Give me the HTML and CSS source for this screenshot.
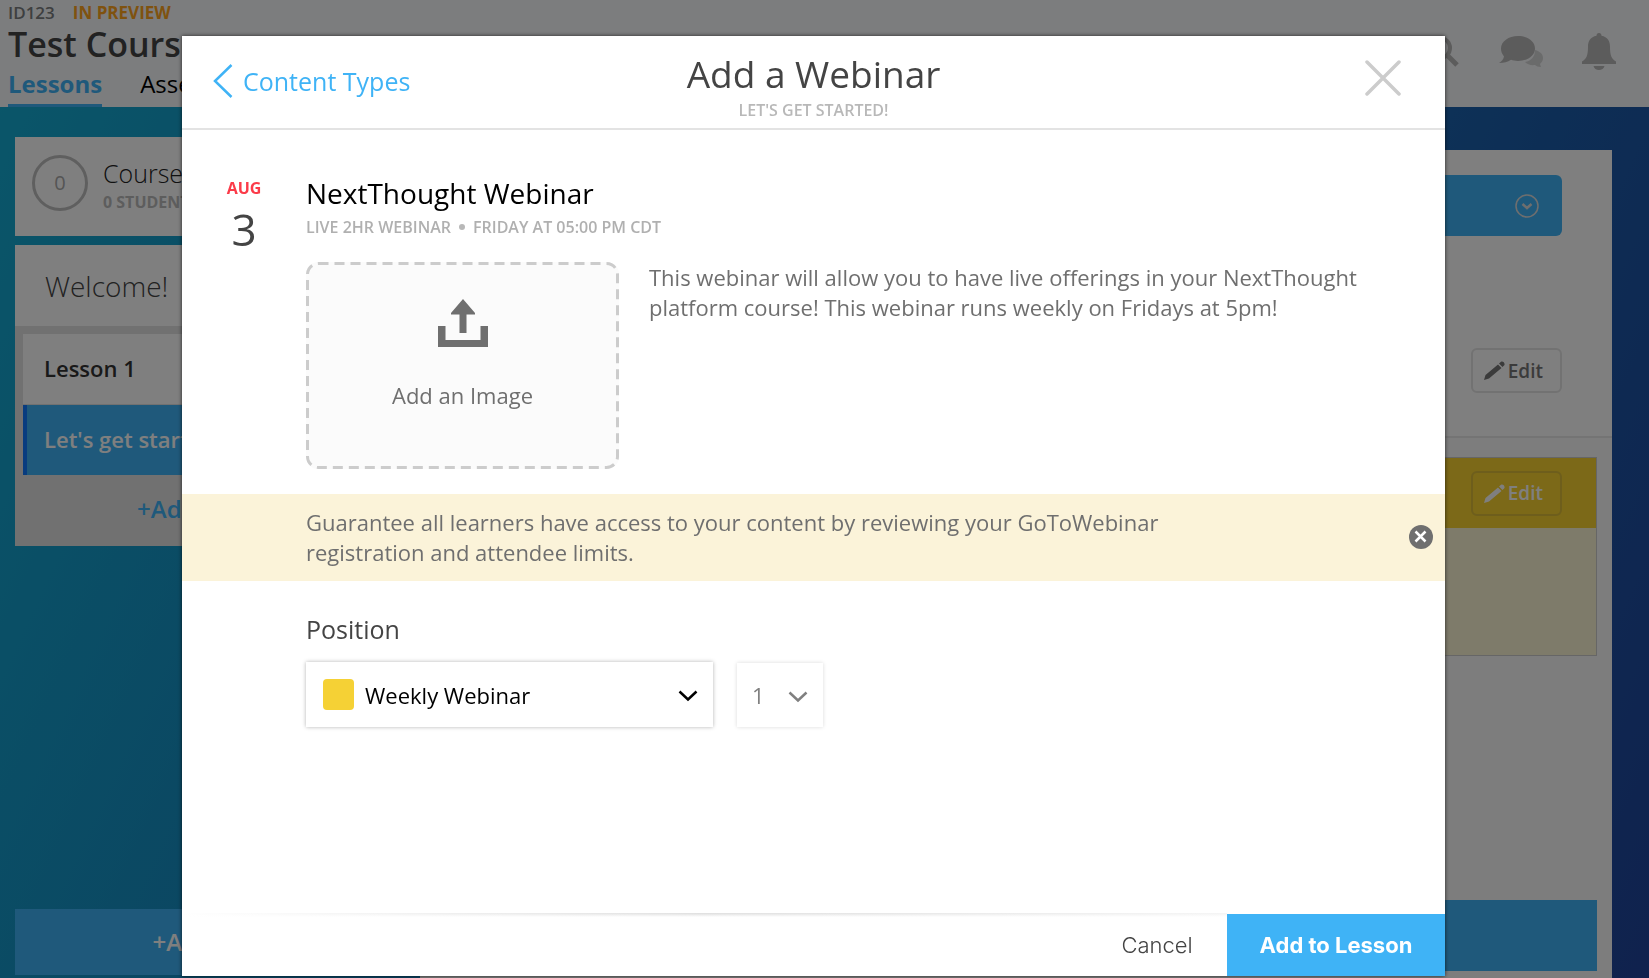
FILE: index.html
```html
<!DOCTYPE html>
<html lang="en">
<head>
<meta charset="utf-8">
<title>Add a Webinar</title>
<link rel="stylesheet" href="styles.css">
</head>
<body>
<div class="page">
  <header class="topbar">
    <div class="course">
      <div class="course-meta"><span>ID123</span><span class="preview">IN PREVIEW</span></div>
      <div class="course-name">Test Course</div>
      <nav class="tabs"><a class="tab tab-active" href="#">Lessons</a><a class="tab" href="#">Assets</a></nav>
    </div>
    <div class="tools">
      <button class="tool" aria-label="Search"><svg width="34" height="34" viewBox="0 0 34 34"><circle cx="14" cy="13" r="10" fill="none" stroke="currentColor" stroke-width="4"/><path d="M21 20l10 10" stroke="currentColor" stroke-width="5"/></svg></button>
      <button class="tool" aria-label="Messages"><svg width="46" height="34" viewBox="0 0 46 34"><path d="M37 15c5 1.500 8 4 8 8 0 3-1.500 4.500-3 6l1 3c-3 0-4.500-1-6-2-4 .5-8-.5-10-3 6-1 10-5 10-12z" fill="currentColor" opacity=".55"/><path d="M20 1c9.500 0 17 5.500 17 12.500S29.500 26 20 26c-3 0-5-.5-7-1.200C9.500 27 6 28 1 28c2.500-1.500 4.500-3.500 5-6.500C4 19 3 16.500 3 13.500 3 6.500 10.500 1 20 1z" fill="currentColor"/></svg></button>
      <button class="tool" aria-label="Notifications"><svg width="34" height="38" viewBox="0 0 34 38"><path d="M17 0c1.600 0 2.500 1.200 2.500 2.800C25.500 4 28 8 28 13.500c0 9 1.500 12.500 6 15V31H0v-2.500c4.500-2.500 6-6 6-15C6 8 8.500 4 14.500 2.800 14.500 1.200 15.400 0 17 0zM11.500 33h11c-.7 2.600-2.700 4-5.500 4s-4.800-1.400-5.500-4z" fill="currentColor"/></svg></button>
    </div>
  </header>
  <main class="columns">
    <aside class="sidebar">
      <section class="card roster">
        <div class="ring">0</div>
        <div><div class="roster-name">Course</div><div class="roster-count">0 STUDENTS</div></div>
      </section>
      <section class="card outline">
        <h2 class="outline-title">Welcome!</h2>
        <div class="outline-list">
          <a class="lesson" href="#">Lesson 1</a>
          <a class="lesson lesson-active" href="#">Let's get started!</a>
          <button class="add-lesson">+Add Lesson</button>
        </div>
      </section>
      <button class="add-unit">+Add Unit</button>
    </aside>
    <section class="content">
      <div class="content-head">
        <button class="publish" aria-label="Publish options"><svg width="24" height="24" viewBox="0 0 24 24" fill="none" stroke="currentColor"><circle cx="12" cy="12" r="11" stroke-width="1.500"/><path d="M7.500 10l4.500 4 4.500-4" stroke-width="2.500"/></svg></button>
        <button class="edit"><svg width="21" height="19" viewBox="0 0 21 19"><path d="M0 19l1.500-5L14 3.500l3.500 3.500L5 17.500zM15 2.500l2-1.800c2-.8 4 1 3.500 3.300L18.500 6z" fill="currentColor"/></svg>Edit</button>
      </div>
      <div class="content-body">
        <div class="block">
          <div class="block-head"><button class="edit edit-light"><svg width="21" height="19" viewBox="0 0 21 19"><path d="M0 19l1.500-5L14 3.500l3.500 3.500L5 17.500zM15 2.500l2-1.800c2-.8 4 1 3.500 3.300L18.500 6z" fill="currentColor"/></svg>Edit</button></div>
        </div>
        <button class="add-section" aria-label="Add section"></button>
      </div>
    </section>
  </main>
</div>

<div class="overlay">
  <div class="modal" role="dialog" aria-modal="true" aria-labelledby="modal-title">
    <header class="modal-head">
      <a class="back" href="#"><svg width="20" height="34" viewBox="0 0 20 34" fill="none" stroke="currentColor" stroke-width="2.500"><path d="M18.500 1L2 17l16.500 16"/></svg>Content Types</a>
      <div class="heading"><h1 class="modal-title" id="modal-title">Add a Webinar</h1><div class="modal-sub">LET'S GET STARTED!</div></div>
      <button class="close" aria-label="Close"><svg width="36" height="36" viewBox="0 0 36 36" stroke="currentColor" stroke-width="3.500" stroke-linecap="round"><path d="M2 2l32 32M34 2L2 34"/></svg></button>
    </header>
    <div class="modal-body">
      <section class="webinar">
        <div class="date"><div class="month">AUG</div><div class="day">3</div></div>
        <div class="details">
          <h2 class="webinar-title">NextThought Webinar</h2>
          <div class="webinar-meta"><span>LIVE 2HR WEBINAR</span><span class="dot"></span><span>FRIDAY AT 05:00 PM CDT</span></div>
          <div class="webinar-row">
            <button class="dropzone">
              <svg class="zone-line" width="100%" height="100%"><rect x="1.500" y="1.500" rx="11"/></svg>
              <svg width="50" height="48" viewBox="0 0 50 48" fill="currentColor"><path d="M25 0L37 14v1.500h-8.500V34h-7V15.500H13V14zM0 27h7.500v14h35V27H50v21H0z"/></svg>
              <span>Add an Image</span>
            </button>
            <p class="description">This webinar will allow you to have live offerings in your NextThought platform course! This webinar runs weekly on Fridays at 5pm!</p>
          </div>
        </div>
      </section>
      <div class="notice">
        <p class="notice-text">Guarantee all learners have access to your content by reviewing your GoToWebinar registration and attendee limits.</p>
        <button class="dismiss" aria-label="Dismiss"><svg width="24" height="24" viewBox="0 0 24 24"><circle cx="12" cy="12" r="12" fill="#6f6f6f"/><path d="M6.500 6.500l10 10M16.500 6.500l-10 10" stroke="#fff" stroke-width="2.500"/></svg></button>
      </div>
      <section class="position">
        <label class="position-label" for="section">Position</label>
        <div class="selects">
          <div class="picker picker-wide">
            <span class="swatch"></span>
            <select id="section"><option>Weekly Webinar</option></select>
            <svg class="chevron" width="20" height="12" viewBox="0 0 20 12" fill="none" stroke="currentColor" stroke-width="2.500"><path d="M1.500 1.500L10 9.500l8.500-8"/></svg>
          </div>
          <div class="picker picker-small">
            <select aria-label="Order"><option>1</option></select>
            <svg class="chevron" width="20" height="12" viewBox="0 0 20 12" fill="none" stroke="currentColor" stroke-width="2.500"><path d="M1.500 1.500L10 9.500l8.500-8"/></svg>
          </div>
        </div>
      </section>
    </div>
    <footer class="modal-foot">
      <button class="cancel">Cancel</button>
      <button class="submit">Add to Lesson</button>
    </footer>
  </div>
</div>
</body>
</html>
```

FILE: styles.css
```css
* { box-sizing: border-box; }
body { margin: 0; font-family: "Open Sans", sans-serif; color: #000; overflow: hidden; }
h1, h2, p { margin: 0; font-weight: 400; }
button, select { font: inherit; color: inherit; background: none; border: 0; padding: 0; margin: 0; }
a { color: inherit; text-decoration: none; }
svg { display: block; flex: none; }

.page { height: 100vh; display: flex; flex-direction: column; background: linear-gradient(115deg, #14aed4 0%, #186cb4 62%, #20449c 100%); }

.topbar { display: flex; justify-content: space-between; padding: 2px 33px 0 8px; height: 107px; background: #f9fafc; }
.course-meta { display: flex; gap: 18px; font-size: 17px; line-height: 22px; font-weight: 600; color: #7c7e80; }
.preview { font-weight: 700; color: #ffa51e; }
.course-name { font-size: 34px; line-height: 40px; font-weight: 600; color: #444; }
.tabs { display: flex; gap: 38px; font-size: 24px; line-height: 40px; }
.tab { height: 43px; }
.tab-active { color: #3fb3f6; font-weight: 700; border-bottom: 3px solid #3fb3f6; }
.tools { display: flex; gap: 38px; align-items: center; padding-bottom: 6px; color: #b8b8b8; }

.columns { flex: 1; min-height: 0; display: grid; grid-template-columns: 390px 1fr; gap: 15px; padding: 0 37px 0 15px; }
.sidebar { display: flex; flex-direction: column; gap: 9px; padding: 30px 0 3px; }
.card { background: #fff; }
.roster { display: flex; gap: 15px; padding: 18px 17px; height: 99px; }
.ring { width: 56px; height: 56px; border: 3px solid #bfbfbf; border-radius: 50%; font-size: 20px; line-height: 50px; text-align: center; color: #aaa; }
.roster-name { font-size: 25px; line-height: 36px; font-weight: 300; color: #222; }
.roster-count { font-size: 16px; line-height: 22px; font-weight: 700; color: #bbb; }
.outline { background: #e2e2e2; }
.outline-title { background: #fff; padding: 2px 30px 0; font-size: 28px; line-height: 79px; font-weight: 300; color: #444; }
.outline-list { padding: 8px 8px 0; height: 220px; }
.lesson { display: block; background: #fff; padding: 0 0 2px 21px; font-size: 22px; line-height: 68px; font-weight: 600; color: #333; }
.lesson-active { margin-top: 1px; background: #3fb3f6; border-left: 4px solid #1078ff; padding-left: 17px; color: #fff; }
.add-lesson { display: block; width: 100%; font-size: 24px; line-height: 68px; font-weight: 600; color: #3fb3f6; }
.add-unit { margin-top: auto; background: #3fb3f6; font-size: 24px; line-height: 66px; font-weight: 600; color: #fff; }

.content { display: flex; flex-direction: column; margin-top: 43px; background: #fafafa; }
.content-head { display: flex; flex-direction: column; align-items: flex-end; gap: 112px; padding: 25px 50px 43px; background: #fff; border-bottom: 2px solid #e8e8e8; }
.publish { display: flex; width: 100%; justify-content: flex-end; align-items: center; height: 61px; padding-right: 23px; border-radius: 6px; background: #3fb3f6; color: #ddd; }
.edit { display: flex; align-items: center; gap: 3px; height: 45px; padding: 0 17px 0 11px; border: 2px solid #e4e4e4; border-radius: 6px; font-size: 19px; font-weight: 600; color: #777; }
.edit-light { color: #fff; border-color: #dcbc38; }
.content-body { flex: 1; display: flex; flex-direction: column; justify-content: space-between; padding: 19px 15px 7px; }
.block { height: 199px; border: 1px solid #ccc; background: #fdf6d5; }
.block-head { display: flex; justify-content: flex-end; align-items: center; height: 70px; padding-right: 34px; background: #f8d230; }
.add-section { height: 71px; background: #3fb3f6; }

.overlay { position: fixed; inset: 0; padding: 36px 204px 2px 182px; background: rgba(0, 0, 0, .5); }
.modal { height: 100%; display: flex; flex-direction: column; background: #fff; box-shadow: 0 0 4px rgba(0, 0, 0, .7); }
.modal-head { display: grid; grid-template-columns: 1fr auto 1fr; align-items: center; height: 94px; padding: 0 31px; border-bottom: 2px solid #e3e3e3; }
.back { display: flex; align-items: center; gap: 10px; padding-bottom: 2px; font-size: 25px; line-height: 34px; color: #3fb3f6; }
.heading { text-align: center; padding-top: 5px; }
.modal-title { font-size: 37px; line-height: 50px; color: #444; }
.modal-sub { font-size: 16px; line-height: 22px; font-weight: 600; color: #b8b8b8; }
.close { justify-self: end; margin: 0 13px 8px 0; color: #ccc; }

.modal-body { flex: 1; }
.webinar { display: flex; padding: 46px 60px 25px 0; }
.date { width: 124px; text-align: center; }
.month { font-size: 16px; line-height: 24px; font-weight: 700; color: #fb3b49; }
.day { font-size: 44px; line-height: 58px; color: #444; }
.details { flex: 1; }
.webinar-title { font-size: 28px; line-height: 34px; }
.webinar-meta { display: flex; align-items: center; gap: 8px; font-size: 16px; line-height: 34px; font-weight: 600; color: #b0b0b0; }
.dot { width: 6px; height: 6px; border-radius: 50%; background: #b8b8b8; }
.webinar-row { display: flex; gap: 30px; margin-top: 18px; }
.dropzone { position: relative; flex: none; display: flex; flex-direction: column; align-items: center; gap: 32px; width: 313px; height: 207px; padding-top: 37px; border-radius: 12px; background: #fbfbfb; font-size: 22px; line-height: 32px; color: #6f6f6f; }
.zone-line { position: absolute; inset: 0; }
.zone-line rect { width: calc(100% - 3px); height: calc(100% - 3px); fill: none; stroke: #ccc; stroke-width: 3; stroke-dasharray: 10 6; }
.description { font-size: 22px; line-height: 30px; color: #6f6f6f; }
.notice { display: flex; justify-content: space-between; align-items: center; padding: 13px 12px 14px 124px; background: #fbf3d9; font-size: 22px; line-height: 30px; color: #6f6f6f; }
.notice-text { max-width: 900px; }
.position { padding: 31px 124px 0; }
.position-label { font-size: 25px; line-height: 34px; color: #444; }
.selects { display: flex; align-items: flex-end; gap: 24px; margin-top: 16px; }
.picker { position: relative; display: flex; box-shadow: 0 0 4px rgba(0, 0, 0, .3); }
.picker select { flex: 1; appearance: none; font-size: 22px; outline: 0; }
.picker-wide { width: 407px; height: 65px; }
.picker-wide select { padding-left: 59px; }
.swatch { position: absolute; left: 17px; top: 17px; width: 31px; height: 31px; border-radius: 4px; background: #f5d135; }
.chevron { position: absolute; right: 15px; top: 28px; pointer-events: none; }
.picker-small { width: 86px; height: 64px; color: #808080; box-shadow: 0 0 4px rgba(0, 0, 0, .15); }
.picker-small select { padding-left: 15px; }

.modal-foot { position: relative; display: flex; justify-content: flex-end; height: 62px; }
.modal-foot::before { content: ""; position: absolute; left: 0; right: 218px; top: -1px; height: 4px; background: linear-gradient(#ffffff00, #fff), linear-gradient(90deg, #fff, #ddd 50%, #f4f4f4); }
.cancel { width: 140px; font-family: Inter, sans-serif; font-size: 22px; font-weight: 300; color: #444; }
.submit { width: 218px; font-family: Inter, sans-serif; font-size: 22px; font-weight: 700; color: #fff; background: #3fb3f6; }
```
